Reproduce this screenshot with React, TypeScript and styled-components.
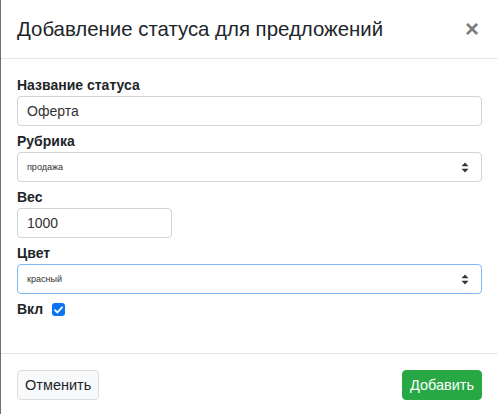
import React, { useState } from 'react';
import styled, { createGlobalStyle } from 'styled-components';

const GlobalStyle = createGlobalStyle`
    html, body {
        margin: 0;
        padding: 0;
        background: #ffffff;
    }
    body {
        font-family: "Liberation Sans", Arial, Helvetica, sans-serif;
        color: #212529;
    }
`

const Modal = styled.div`
    width: 498px;
    height: 414px;
    box-sizing: border-box;
    border-left: 1px solid #707070;
    background: #fff;
    display: flex;
    flex-direction: column;
    overflow: hidden;
`

const Header = styled.div`
    display: flex;
    align-items: center;
    justify-content: space-between;
    height: 59px;
    box-sizing: border-box;
    padding: 0 16px 0 16px;
    border-bottom: 1px solid #e4e6e8;
`

const Title = styled.h5`
    margin: 0;
    font-size: 20.4px;
    font-weight: normal;
    color: #212529;
    line-height: 1.5;
`

const Close = styled.button`
    border: none;
    background: transparent;
    padding: 0;
    margin-right: 3px;
    font-family: "Liberation Sans", Arial, sans-serif;
    font-size: 24px;
    font-weight: bold;
    line-height: 1;
    color: #7d7d7d;
    cursor: pointer;
`

const Body = styled.div`
    flex: 1;
    padding: 16px 16px 16px 16px;
    display: flex;
    flex-direction: column;
`

const Group = styled.div`
    display: flex;
    flex-direction: column;
    margin-bottom: 5px;
`

const InlineGroup = styled.div`
    display: flex;
    align-items: center;
    gap: 9px;
`

const Label = styled.label`
    font-size: 14px;
    font-weight: bold;
    line-height: 20px;
    margin-bottom: 1px;
    color: #212529;
`

const TextInput = styled.input<{ $width?: number }>`
    box-sizing: border-box;
    width: ${p => p.$width ? `${p.$width}px` : '100%'};
    height: 30px;
    padding: 0 9px;
    border: 1px solid #ced4da;
    border-radius: 4px;
    font-family: "Liberation Sans", Arial, sans-serif;
    font-size: 14px;
    color: #333;
    outline: none;
`

const SelectWrap = styled.div<{ $focused?: boolean }>`
    position: relative;
    box-sizing: border-box;
    height: 30px;
    border: 1px solid ${p => p.$focused ? '#80b7f5' : '#ced4da'};
    border-radius: 4px;
    display: flex;
    align-items: center;
    padding: 0 9px;
    font-size: 9px;
    color: #333;
`

const SelectText = styled.span`
    flex: 1;
`

const Arrows = styled.svg`
    width: 8px;
    height: 11px;
    margin-right: 3px;
`

const Check = styled.span`
    width: 13px;
    height: 13px;
    border-radius: 3px;
    background: #0b74f5;
    display: inline-flex;
    align-items: center;
    justify-content: center;
`

const Footer = styled.div`
    height: 61px;
    box-sizing: border-box;
    border-top: 1px solid #e4e6e8;
    padding: 16px 16px 0 16px;
    display: flex;
    justify-content: space-between;
    align-items: flex-start;
`

const Button = styled.button<{ $primary?: boolean }>`
    height: 30px;
    padding: 0 7px;
    border-radius: 4px;
    font-family: "Liberation Sans", Arial, sans-serif;
    font-size: 14.5px;
    border: 1px solid ${p => p.$primary ? '#28a745' : '#dcdcdc'};
    background: ${p => p.$primary ? '#28a745' : '#f8f9fa'};
    color: ${p => p.$primary ? '#ffffff' : '#212529'};
    cursor: pointer;
`

const SelectArrows = () => (
    <Arrows viewBox="0 0 8 11">
        <path d="M4 0.5 L7.5 4.3 H0.5 Z" fill="#333" />
        <path d="M4 10.5 L7.5 6.7 H0.5 Z" fill="#333" />
    </Arrows>
)

function Select(props: { value: string, focused?: boolean }) {
    return (
        <SelectWrap $focused={props.focused}>
            <SelectText>{props.value}</SelectText>
            <SelectArrows />
        </SelectWrap>
    )
}

export default function App() {
    const [name, setName] = useState('Оферта')
    const [weight, setWeight] = useState('1000')

    return (
        <>
            <GlobalStyle />
            <Modal>
                <Header>
                    <Title>Добавление статуса для предложений</Title>
                    <Close>×</Close>
                </Header>
                <Body>
                    <Group>
                        <Label>Название статуса</Label>
                        <TextInput value={name} onChange={e => setName(e.target.value)} />
                    </Group>
                    <Group>
                        <Label>Рубрика</Label>
                        <Select value="продажа" />
                    </Group>
                    <Group>
                        <Label>Вес</Label>
                        <TextInput $width={155} value={weight} onChange={e => setWeight(e.target.value)} />
                    </Group>
                    <Group>
                        <Label>Цвет</Label>
                        <Select value="красный" focused />
                    </Group>
                    <InlineGroup>
                        <Label>Вкл</Label>
                        <Check>
                            <svg width="9" height="8" viewBox="0 0 9 8">
                                <path d="M1 4.2 L3.4 6.5 L8 1.3" stroke="#fff" strokeWidth="1.8" fill="none" strokeLinecap="round" strokeLinejoin="round" />
                            </svg>
                        </Check>
                    </InlineGroup>
                </Body>
                <Footer>
                    <Button>Отменить</Button>
                    <Button $primary>Добавить</Button>
                </Footer>
            </Modal>
        </>
    );
}
